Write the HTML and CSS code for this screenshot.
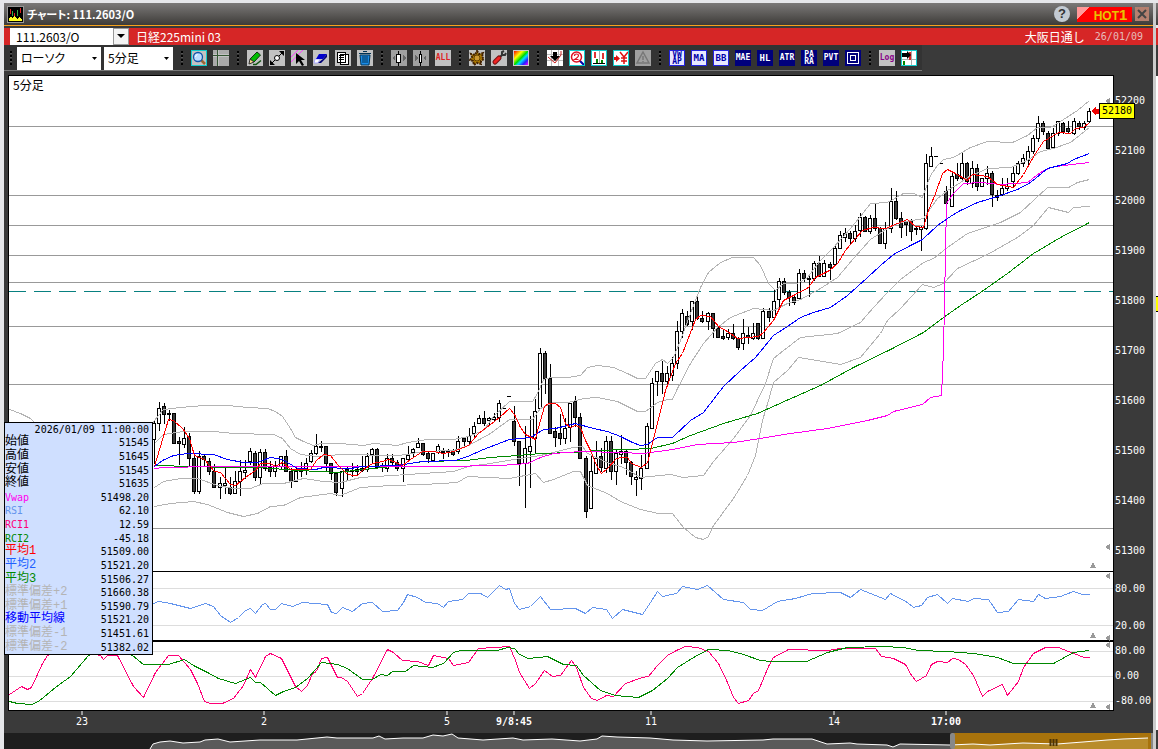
FILE: index.html
```html
<!DOCTYPE html>
<html lang="ja">
  <head>
    <title>チャート: 111.2603/O</title>
    <meta charset="utf-8" />
    <meta name="viewport" content="width=device-width, initial-scale=1.0" />
    <link rel="stylesheet" href="styles.css">
  </head>
  <body>
    <main class="window">
      <header class="title">
        <svg class="app" width="17" height="17" viewBox="0 0 17 17" shape-rendering="crispEdges">
          <path fill="#000" stroke="#999" d="M.5.5h16v16H.5z" />
          <path stroke="#d22" d="M3.5 3v5M7.5 7v4M13.5 2v5" />
          <path stroke="#3a4" d="M5.5 5v5M10.5 4v6" />
          <path fill="#ff2" d="M2 15v-3l2-1 1 1 3-2 2 3 2-2 3 2v2z" />
        </svg>
        <h1>チャート: 111.2603/O</h1>
        <button class="help" aria-label="ヘルプ">?</button>
        <button class="hot">HOT<b>1</b></button>
        <button class="close" aria-label="閉じる">
          <svg width="14" height="14"><path stroke="#444" stroke-width="2" d="M3 3l8 8M11 3l-8 8" /></svg>
        </button>
      </header>

      <div class="symbol">
        <input type="text" value="111.2603/O" aria-label="銘柄コード" />
        <button class="drop" aria-label="銘柄履歴"><svg width="8" height="5"><path d="M0 0h8L4 4z" /></svg></button>
        <span class="name">日経225mini 03</span>
        <span class="session">大阪日通し</span>
        <time class="mono">26/01/09</time>
      </div>

      <div class="toolbar">
        <div class="combos">
          <i class="sep"></i>
          <label class="combo wide">
            <select aria-label="チャート種別"><option>ローソク</option></select>
            <svg width="5" height="3"><path d="M0 0h5L2.5 3z" /></svg>
          </label>
          <label class="combo">
            <select aria-label="足種"><option>5分足</option></select>
            <svg width="5" height="3"><path d="M0 0h5L2.5 3z" /></svg>
          </label>
        </div>
        <i class="sep"></i>
        <button class="cyan" aria-label="拡大">
          <svg viewBox="1 1 14 14"><path stroke="#963" stroke-width="2.5" d="M10 10l4 4" /><circle cx="7" cy="7" r="4.5" fill="#bdf" stroke="#15a" stroke-width="1.3" /><path stroke="#fff" fill="none" d="M4.500 7q0-2 2-2.500" /></svg>
        </button>
        <button aria-label="十字線">
          <svg viewBox="0 0 16 16" shape-rendering="crispEdges"><path fill="#aaa" d="M0 0h4v4H0zM6 0h10v4H6zM0 7h4v9H0zM6 7h10v9H6z" /><path stroke="#353" d="M0 5.500h16M4.500 0v16" /></svg>
        </button>
        <i class="sep"></i>
        <button aria-label="ペン">
          <svg viewBox="0 0 16 16"><path fill="#0b0" stroke="#131" d="M3 9l7-7 3.500 3L7 12z" /><path fill="#fd8" stroke="#333" d="M3 9l4 3-5 2z" /><path stroke="#151" stroke-width="1.500" d="M6 14.500h3l5-4" fill="none" /></svg>
        </button>
        <button aria-label="トレンドライン">
          <svg viewBox="0 0 16 16"><path stroke="#000" d="M2 14L14 2" /><path d="M1 15v-5l5 5zM15 1v5l-5-5z" /><circle cx="8" cy="8" r="2.500" fill="#fff" stroke="#000" /></svg>
        </button>
        <button aria-label="選択">
          <svg viewBox="0 0 16 16"><path stroke="#f4f" d="M0 7l7-7M0 12L12 0" /><path d="M5 3l9 7H10l3 5-2 1-3-5-3 3z" /></svg>
        </button>
        <button aria-label="消しゴム">
          <svg viewBox="0 0 16 16"><path fill="#fff" stroke="#aaf" d="M2 9h5l-2 4H1z" /><path fill="#00c" d="M6 4h8l-4 5H3z" /><path fill="#007" d="M14 4v3l-6 6H5l5-4z" /></svg>
        </button>
        <button aria-label="コピー">
          <svg viewBox="0 0 16 16" shape-rendering="crispEdges"><path fill="#fff" stroke="#000" d="M5.500 4.500h8v10h-8zM2.500 2.500h8v10h-8z" /><path stroke="#000" d="M4 5.500h5M4 7.500h5M4 9.500h5" /></svg>
        </button>
        <button aria-label="削除">
          <svg viewBox="0 0 16 16"><path fill="#1a8ce8" stroke="#035" d="M3 5h10l-1 10H4z" /><path stroke="#035" d="M2 3.500h12M6 1.500h4M6 6v7M8 6v7M10 6v7" /></svg>
        </button>
        <i class="sep"></i>
        <button class="dim" aria-label="足を狭く">
          <svg viewBox="0 0 16 16" shape-rendering="crispEdges"><path fill="#666" d="M1 8l3-3v6zM15 8l-3-3v6z" /><path d="M7 1h1v15H7z" /><path fill="#fff" stroke="#000" d="M5.500 4.500h4v8h-4z" /></svg>
        </button>
        <button class="dim" aria-label="足を広く">
          <svg viewBox="0 0 16 16" shape-rendering="crispEdges"><path fill="#666" d="M5 8L2 5v6zM10 8l3-3v6z" /><path d="M7 1h1v15H7z" /><path fill="#fff" stroke="#000" d="M6.500 4.500h2v8h-2z" /></svg>
        </button>
        <button class="all">ALL</button>
        <i class="sep"></i>
        <button aria-label="設定">
          <svg viewBox="0 0 16 16"><path stroke="#420" stroke-width="2" stroke-dasharray="2 1" fill="#a70" d="M8 1l2 3 4-1-1 4 2 2-3 2v3l-4-1-3 2-1-4-3-1 2-3-1-3 4 1z" /><circle cx="8" cy="8" r="3" fill="#c93" stroke="#640" /></svg>
        </button>
        <button aria-label="ツール">
          <svg viewBox="0 0 16 16"><path stroke="#333" stroke-width="2" fill="none" d="M8 8l3-3V2l2-1M11 5h3l1-2" /><path stroke="#711" stroke-width="5" stroke-linecap="round" d="M4 12l4-4" /><path stroke="#e22" stroke-width="3" stroke-linecap="round" d="M4 12l4-4" /></svg>
        </button>
        <button class="rainbow" aria-label="配色"></button>
        <i class="sep"></i>
        <button class="paper" aria-label="シグナル">
          <svg viewBox="0 0 16 16"><path stroke="#bbb" d="M0 4.500h16M0 10.500h16M4.500 0v16M11.500 0v16" /><path stroke="#c22" fill="none" d="M1 7l7 6 6-8V1" /><path d="M6 2h4v4h3l-5 5-5-5h3z" /></svg>
        </button>
        <button class="paper cyan" aria-label="銘柄比較">
          <svg viewBox="1 1 14 14"><path stroke="#00a" stroke-width="2" d="M10 10l5 5" /><circle cx="7.500" cy="7" r="5" fill="#fff" stroke="#d12" stroke-width="1.500" /><path fill="none" stroke="#d12" stroke-width="1.200" d="M5.500 6q0-2 2-2t2 1.500-4 4h4" /></svg>
        </button>
        <button class="paper cyan" aria-label="出来高">
          <svg viewBox="1 1 14 14" shape-rendering="crispEdges"><path fill="#d33" d="M3 2h2v6H3zM11 3h2v6h-2z" /><path stroke="#aaa" d="M8.500 1v12" /><path fill="#080" d="M5 9h2v4H5zM10 10h2v3h-2z" /><path d="M2 13h12v1H2z" /></svg>
        </button>
        <button class="paper cyan" aria-label="価格">
          <svg viewBox="1 1 14 14"><path fill="#d11" d="M1 7h2V5l4 3.500L3 12v-2H1z" /><path stroke="#d11" stroke-width="1.500" fill="none" d="M7 2l4 5 4-5M11 7v7M8 8h6M8 11h6" /></svg>
        </button>
        <button class="off" aria-label="アラート">
          <svg viewBox="0 0 16 16"><path fill="none" stroke="#777" stroke-width="1.500" d="M8 2l6 11H2zM8 6v4M8 11v1" /></svg>
        </button>
        <i class="sep"></i>
        <button class="ind two lit">VW<br />AP</button>
        <button class="ind lit">MA</button>
        <button class="ind lit">BB</button>
        <button class="ind tight">MAE</button>
        <button class="ind">HL</button>
        <button class="ind tight">ATR</button>
        <button class="ind two">PA<br />RA</button>
        <button class="ind tight">PVT</button>
        <button class="ind" aria-label="枠">
          <svg viewBox="0 0 16 16" shape-rendering="crispEdges"><path fill="none" stroke="#fff" d="M2.500 2.500h11v11h-11zM5.500 5.500h5v5h-5z" /></svg>
        </button>
        <i class="sep"></i>
        <button class="log">Log</button>
        <button class="paper cyan" aria-label="右寄せ">
          <svg viewBox="1 1 14 14"><path stroke="#aaa" d="M0 9.500h16M10.500 0v16" /><path fill="#d22" d="M8 2h2v8H8z" /><path fill="#080" d="M2 11h2v4H2z" /><path d="M1 3h5V1l4 4-4 4V7H1z" /></svg>
        </button>
      </div>

      <section class="chart">
        <div class="plot">
          <svg id="plot" viewBox="9 76 1104 634" preserveAspectRatio="none"></svg>
          <span class="foot">5分足</span>
          <output class="price mono">52180</output>
        </div>
        <div class="axis mono">
          <span>52200</span><span>52100</span><span>52000</span><span>51900</span><span>51800</span>
          <span>51700</span><span>51600</span><span>51500</span><span>51400</span><span>51300</span>
          <span class="sub rsi">80.00</span><span class="sub">20.00</span>
          <span class="sub">80.00</span><span class="sub">0.00</span><span class="sub">-80.00</span>
        </div>
        <table class="values">
          <thead>
            <tr><th colspan="2" class="mono">2026/01/09 11:00:00</th></tr>
          </thead>
          <tbody class="mono">
            <tr><th>始値</th><td>51545</td></tr>
            <tr><th>高値</th><td>51645</td></tr>
            <tr><th>安値</th><td>51545</td></tr>
            <tr><th>終値</th><td>51635</td></tr>
            <tr class="vwap latin"><th>Vwap</th><td>51498.20</td></tr>
            <tr class="rsi latin"><th>RSI</th><td>62.10</td></tr>
            <tr class="rci1 latin"><th>RCI1</th><td>12.59</td></tr>
            <tr class="rci2 latin"><th>RCI2</th><td>-45.18</td></tr>
            <tr class="ma1"><th>平均1</th><td>51509.00</td></tr>
            <tr class="ma2"><th>平均2</th><td>51521.20</td></tr>
            <tr class="ma3"><th>平均3</th><td>51506.27</td></tr>
            <tr class="band"><th>標準偏差+2</th><td>51660.38</td></tr>
            <tr class="band"><th>標準偏差+1</th><td>51590.79</td></tr>
            <tr class="mid"><th>移動平均線</th><td>51521.20</td></tr>
            <tr class="band"><th>標準偏差-1</th><td>51451.61</td></tr>
            <tr class="band"><th>標準偏差-2</th><td>51382.02</td></tr>
          </tbody>
        </table>
      </section>

      <svg id="times" class="times mono"></svg>
      <svg id="nav" class="nav" viewBox="4 733 1149 16" preserveAspectRatio="none"></svg>
    </main>

    <aside class="next">
      <div class="next-title"></div>
      <div class="next-symbol"></div>
      <div class="next-tools"></div>
      <div class="next-body"><i></i></div>
      <div class="next-foot"></div>
    </aside>
    <script src="chart.js"></script>
  </body>
</html>
```
FILE: styles.css
```css
html,
body {
  margin: 0;
  padding: 0;
}
body {
  display: flex;
  min-height: 100vh;
  padding: 3px 0 0 4px;
  box-sizing: border-box;
  overflow: hidden;
  font: 12px/16px "Noto Sans CJK JP", sans-serif;
  color: #000;
  background: #e6e7ea;
}
button,
input,
select {
  margin: 0;
  border: 0;
  padding: 0;
  border-radius: 0;
  font: inherit;
  color: inherit;
}
.mono {
  font: 10px/14px "DejaVu Sans Mono", "Noto Sans CJK JP", monospace;
}
.window {
  flex: 1;
  min-width: 0;
  display: flex;
  flex-direction: column;
  background: #3a3a3a;
}

/* title bar */
.title {
  display: flex;
  align-items: center;
  gap: 3px;
  height: 22px;
  padding: 0 4px 0 3px;
  border-bottom: 1px solid #f5a21c;
  color: #fff;
  background: linear-gradient(#7b7978, #3d3b38);
}
.title h1 {
  flex: 1;
  margin: 0;
  font-size: 11px;
  font-feature-settings: "palt";
}
.title .help {
  width: 16px;
  height: 16px;
  margin-right: 4px;
  border-radius: 50%;
  font: bold 13px/16px "Liberation Sans", sans-serif;
  color: #333;
  background: #c3cad2;
}
.title .hot {
  width: 55px;
  height: 15px;
  padding-left: 12px;
  font: bold 12px/15px "Liberation Sans", sans-serif;
  color: #e8c400;
  background: linear-gradient(135deg, #f99 9px, #f00 9px);
}
.hot b {
  font-size: 15px;
}
.title .close {
  width: 14px;
  height: 14px;
  background: #b5806f;
}
.close svg {
  display: block;
}

/* symbol bar */
.symbol {
  display: flex;
  align-items: center;
  height: 17px;
  margin-top: 2px;
  padding: 0 10px 0 6px;
  color: #fff;
  background: #d62626;
}
.symbol input {
  width: 97px;
  height: 17px;
  padding-left: 6px;
  color: #000;
  background: #fff;
}
.symbol .drop {
  width: 16px;
  height: 17px;
  border: 1px solid #999;
  background: #f4f4f4;
  line-height: 0;
}
.symbol .name {
  flex: 1;
  padding-left: 7px;
}
.symbol time {
  padding-left: 10px;
  color: #e6bcbc;
}

/* toolbar */
.toolbar {
  align-self: flex-start;
  display: flex;
  align-items: center;
  gap: 6px;
  height: 24px;
  padding: 1px 5px 0 4px;
  border-bottom: 1px solid #777;
  background: #333;
}
.combos {
  display: flex;
  align-items: center;
  gap: 3px;
}
.sep {
  width: 2px;
  height: 14px;
  margin: 0 2px;
  background: repeating-linear-gradient(#000 0 2px, #555 2px 3px, #333 3px 4px);
}
.combo {
  display: grid;
  align-items: center;
  width: 69px;
}
.combo.wide {
  width: 84px;
}
.combo select,
.combo svg {
  grid-area: 1 / 1;
}
.combo select {
  appearance: none;
  height: 23px;
  padding-left: 4px;
  font-feature-settings: "palt";
  background: #fff;
}
.combo svg {
  justify-self: end;
  margin-right: 4px;
  pointer-events: none;
}
.toolbar button {
  width: 16px;
  height: 16px;
  overflow: hidden;
  font: bold 8px/16px "DejaVu Sans Mono", monospace;
  text-align: center;
  white-space: nowrap;
  background: #c2c2c2;
}
.toolbar button svg {
  display: block;
  width: 100%;
  height: 100%;
}
.toolbar .dim,
.toolbar .off {
  background: #a0a0a0;
}
.toolbar .paper {
  background: #fff;
}
.toolbar .cyan {
  border: 1px solid #1cc;
}
.toolbar .all {
  color: #d22;
}
.toolbar .log {
  color: #808;
}
.toolbar .rainbow {
  border: 1px solid #ccc;
  background: linear-gradient(135deg, #f00, #ff0 30%, #0d0 50%, #0df 62%, #22f 80%, #f0f);
}
.toolbar .ind {
  color: #fff;
  background: #00007c;
}
.toolbar .ind:not(.tight):not(.two) {
  font-size: 9px;
}
.toolbar .two {
  font-size: 8px;
  line-height: 7px;
}
.toolbar .lit {
  border: 1px solid #22d;
  line-height: 14px;
  color: #00a;
  background: #e8e8ff;
}
.toolbar .two.lit {
  line-height: 7px;
}

/* chart */
.chart {
  position: relative;
  display: flex;
  align-items: flex-start;
  margin-top: 4px;
  padding-left: 4px;
}
.plot {
  position: relative;
  flex: 1;
  min-width: 0;
  border: 1px solid #000;
  background: #fff;
}
.plot svg {
  display: block;
  width: 100%;
  height: 634px;
  shape-rendering: crispEdges;
}
.foot {
  position: absolute;
  top: 1px;
  left: 4px;
}
.price {
  position: absolute;
  top: 27px;
  right: -22px;
  z-index: 1;
  border: 1px solid #000;
  padding: 0 2px;
  background: #ff0;
}
.axis {
  display: flex;
  flex-direction: column;
  width: 38px;
  padding: 1px 0 0 1px;
  color: #fff;
}
.axis span {
  height: 50px;
  line-height: 50px;
}
.axis .sub {
  height: 25px;
  line-height: 25px;
}
.axis .sub:last-child {
  height: 22px;
}
.axis .rsi {
  margin-bottom: 12px;
}
.values {
  position: absolute;
  left: 0;
  bottom: 56px;
  width: 149px;
  height: 233px;
  border: 1px solid #000;
  border-collapse: separate;
  border-spacing: 0;
  background: #cfdfff;
}
.values th,
.values td {
  padding: 0;
  line-height: 13px;
}
.values tbody th {
  font: 12px/13px "Liberation Mono", "Noto Sans CJK JP", monospace;
  text-align: left;
  color: inherit;
}
.values .latin th {
  font: 10px/13px "DejaVu Sans Mono", monospace;
}
.values td,
.values thead th {
  padding-right: 3px;
  font-weight: normal;
  text-align: right;
  color: #000;
}
.times {
  width: 100%;
  height: 22px;
}
.times text {
  fill: #fff;
  text-anchor: middle;
}
.times .day {
  font-weight: bold;
}
.times line {
  stroke: #fff;
}
.nav {
  width: 100%;
  height: 16px;
}

/* line colours, shared by the plot and the value list */
.line {
  fill: none;
  stroke: currentColor;
  vector-effect: non-scaling-stroke;
}
.vwap { color: #f0e; }
.line.rsi, tr.rsi { color: #6495ed; }
.rci1 { color: #f07; }
.rci2 { color: #080; }
.ma1 { color: #f00; }
.ma2 { color: #2060ff; }
.line.ma2 { color: #00f; }
.ma3 { color: #080; }
.band { color: #b4b4b4; }
.mid { color: #00f; }

/* edge of the window behind */
.next {
  display: flex;
  flex-direction: column;
  width: 2px;
  border-left: 3px solid #ccc;
}
.next-title {
  height: 22px;
  background: linear-gradient(#7b7978, #3d3b38);
}
.next-symbol {
  height: 17px;
  margin-top: 3px;
  background: #d62626;
}
.next-tools {
  height: 31px;
  background: #3a3a3a;
}
.next-body {
  flex: 1;
  padding-top: 220px;
  background: #fff;
}
.next-body i {
  display: block;
  height: 14px;
  border: solid #000;
  border-width: 1px 0;
  background: #ff0;
}
.next-foot {
  height: 19px;
  background: #3a3a3a;
}
```
FILE: chart.js
```js
const NS = 'http://www.w3.org/2000/svg';

function add(parent, tag, attrs, text) {
  const e = document.createElementNS(NS, tag);
  for (const [k, v] of Object.entries(attrs)) e.setAttribute(k, v);
  if (text) e.textContent = text;
  parent.appendChild(e);
  return e;
}

// high, body top, body bottom, low; a leading "-" is a falling bar
const bars = `
421,423,439,463 402,408,423,430 -403,406,414,423 410,413,414,420 -413,413,443,443 -437,441,443,464
427,438,444,447 -433,436,458,465 -455,458,491,493 451,456,491,493 -454,456,459,465 -458,461,471,474
-464,471,487,487 477,483,487,498 468,483,485,493 -477,487,493,494 471,481,493,493 460,471,481,495
460,470,472,478 448,451,461,464 -451,453,477,480 449,452,477,484 -449,452,468,470 -461,467,471,476
461,465,471,476 456,456,466,468 -450,456,471,471 -468,471,481,487 468,471,481,481 -462,468,471,476
458,463,469,474 450,453,461,462 434,446,453,454 441,446,447,451 -446,446,463,470 -463,463,473,479
-473,473,492,495 471,471,488,496 -467,469,471,479 463,470,471,476 -465,469,471,475 456,468,470,471
453,456,469,471 448,449,454,463 -448,449,467,467 463,466,467,471 454,458,468,471 -454,458,462,464
-460,462,468,470 458,458,468,481 446,455,459,459 448,449,452,457 438,443,447,447 -443,443,454,455
-452,453,458,462 453,453,460,460 444,446,452,453 448,451,452,458 449,451,452,456 -449,451,454,455
436,441,451,453 -437,438,441,447 428,436,441,444 422,426,433,436 415,418,423,423 -411,418,423,425
417,418,420,424 413,417,419,421 400,403,417,421 408,408,408,409 396,396,396,397 -406,421,441,445
-441,441,463,485 426,448,463,507 416,446,451,487 399,411,438,452 348,353,408,408 -351,353,378,393
-364,378,433,433 -427,431,437,446 -414,433,438,444 418,428,438,443 403,403,427,441 -396,401,417,426
-413,417,458,458 -456,458,511,517 456,471,508,508 441,458,473,473 -448,456,467,471 436,441,468,472
-436,441,471,479 449,453,471,484 435,451,454,463 -449,451,462,474 -461,462,476,484 471,477,479,495
455,468,478,489 423,426,468,468 378,383,428,428 371,371,381,395 -361,373,381,393 366,373,381,386
357,363,375,380 321,331,363,368 309,313,331,337 -311,316,324,325 301,301,321,329 -296,301,318,319
-311,318,321,322 312,313,321,329 -313,313,328,337 -326,328,337,337 -330,336,338,339 329,333,337,339
-324,333,338,339 -337,338,347,349 319,333,343,349 -327,335,337,343 323,333,338,339 -323,323,338,339
308,311,338,338 -308,311,317,321 290,301,317,317 278,281,299,306 -278,281,292,294 -290,292,297,305
-295,297,302,304 269,273,298,298 -270,273,278,281 276,278,279,296 261,263,278,280 -256,263,276,276
260,263,276,276 -262,264,267,279 246,248,264,265 231,235,248,248 228,233,237,241 -231,233,238,244
225,231,238,241 213,217,230,236 -216,217,231,231 215,218,231,233 -203,218,228,230 -227,228,243,243
222,228,243,248 188,201,228,232 -191,201,218,219 -212,218,227,237 -221,221,224,235 -219,220,231,240
226,228,229,234 226,227,229,250 154,163,228,229 147,156,166,166 156,156,156,158 163,163,163,164
-186,191,203,205 172,176,206,206 -163,174,178,180 152,163,178,180 -162,163,181,184 161,168,183,187
-164,168,186,190 178,178,186,186 166,173,178,184 -171,173,194,206 190,195,197,200 178,188,194,195
178,186,188,190 166,173,181,187 161,163,173,174 154,158,163,166 146,151,160,166 135,138,151,153
116,123,138,141 -121,123,131,134 -131,133,148,148 128,133,147,148 121,121,133,135 -122,123,131,133
-121,128,131,133 118,121,133,134 -121,123,126,129 121,123,127,129 108,111,121,122`;

const lines = {
  'band up2': `9,409 20,413 30,418 35,423 60,440 110,450 140,440 154,420 163,409 180,407 203,405 227,405 247,407
    267,408 275,411 282,416 290,428 295,437 303,441 313,445 320,443 340,443 363,445 373,443 397,445 407,442
    427,439 453,439 468,436 483,430 493,416 509,401 532,401 537,393 543,379 550,377 567,377 580,375 587,367
    597,365 613,367 627,373 637,378 645,378 655,363 662,359 667,363 673,357 680,340 690,313 700,287 708,272
    720,262 732,257 753,257 760,265 768,283 775,290 783,283 797,283 807,277 820,260 833,247 850,228 860,216
    870,203 887,202 903,193 913,193 922,197 930,175 937,165 943,159 953,157 970,147 987,141 1012,142 1027,135
    1037,127 1050,127 1060,121 1077,110 1089,100`,
  'band up1': `154,443 163,434 183,431 213,431 233,433 273,434 282,438 290,448 300,454 317,456 340,454 397,455
    407,454 423,451 453,450 468,445 490,433 509,419 532,419 540,408 553,402 568,402 583,398 597,397 617,401
    627,406 637,411 645,411 657,402 667,399 672,399 677,388 690,363 703,343 717,327 730,317 753,308 773,310
    787,303 800,299 820,288 837,277 853,258 870,239 887,228 900,222 923,218 937,198 947,190 960,182 967,177
    987,168 1010,167 1027,160 1040,151 1053,148 1070,142 1089,127`,
  'band dn1': `154,487 163,481 180,478 197,478 217,485 233,488 250,488 263,483 283,483 303,478 323,481 340,482
    360,477 407,474 453,471 468,466 490,463 520,458 540,455 573,447 582,446 587,453 607,462 623,467 640,477
    670,474 683,477 703,475 713,461 733,438 750,415 757,400 765,383 773,358 783,350 800,337 837,333 860,322
    873,307 887,292 900,279 923,262 933,258 947,247 967,233 1000,222 1020,212 1047,187 1068,187 1077,182
    1089,179`,
  'band dn2': `154,506 170,503 193,501 207,504 227,512 243,516 257,513 270,506 283,505 300,497 330,493 340,495
    360,487 390,485 423,484 457,482 467,476 509,478 535,473 543,482 553,479 573,471 580,471 587,485 607,493
    620,501 640,509 658,513 672,513 683,527 695,537 703,539 708,536 713,525 733,498 747,475 755,455 762,420
    768,400 773,382 787,370 798,357 840,364 860,357 880,333 887,320 900,308 922,284 933,287 943,283 957,268
    987,254 1003,245 1017,237 1033,225 1048,207 1060,210 1068,212 1073,207 1089,206`,
  ma3: `154,465 230,467 260,467 297,470 320,471 337,472 363,469 383,467 403,464 423,461 465,460 490,457 517,455
    540,453 573,452 597,450 627,449 650,448 672,443 690,435 723,423 757,413 786,400 820,385 853,367 890,349
    923,332 943,317 960,305 980,292 1007,273 1033,253 1060,237 1089,222`,
  vwap: `154,468 163,467 213,466 440,466 500,465 527,463 540,457 553,453 580,451 620,452 643,453 672,449 697,444
    733,442 760,438 783,434 827,428 867,420 887,415 893,411 922,404 930,397 941,395 943,350 946,203 953,193
    963,183 980,182 1000,184 1027,182 1040,172 1050,167 1063,165 1089,162`,
  ma2: `154,466 162,460 173,455 187,453 213,454 227,459 243,462 257,462 270,457 282,459 297,468 315,469 323,467
    350,468 362,466 398,465 422,461 455,460 467,456 483,449 509,439 530,437 543,429 555,428 575,423 593,428
    607,431 620,436 632,442 640,445 647,444 657,437 672,437 690,420 703,412 723,386 740,370 755,357 773,335
    787,326 800,317 813,312 830,307 847,295 867,277 880,265 893,254 910,245 922,239 937,225 950,216 960,210
    977,202 997,196 1017,189 1030,182 1047,168 1067,163 1073,159 1089,153`,
  ma1: `154,466 168,419 173,420 182,428 189,438 194,455 204,459 214,471 220,472 230,484 235,485 245,477 255,470
    260,463 270,463 275,466 282,462 290,469 310,469 316,460 323,454 330,455 337,464 346,473 352,475 357,475
    362,470 372,463 382,461 388,459 393,461 402,465 410,459 422,451 433,451 443,453 453,451 468,445 478,433
    490,424 499,417 509,408 514,414 520,427 525,434 535,439 538,427 544,406 548,403 555,403 560,407 565,423
    570,427 575,425 580,427 585,440 590,450 596,465 601,473 607,468 616,458 622,457 627,457 631,463 641,467
    647,462 651,447 657,423 665,390 675,363 682,353 692,327 695,319 700,315 710,316 718,326 727,331 737,338
    758,336 763,332 773,320 783,300 793,295 808,287 815,277 829,270 837,263 845,250 855,238 862,230 872,227
    885,228 897,223 907,219 915,226 923,227 928,210 935,193 942,173 947,169 953,172 967,180 972,174 987,176
    997,184 1013,187 1023,174 1035,153 1043,141 1058,132 1070,133 1075,128 1083,127 1089,122`,
  rsi: `153,603 158,601 170,603 190,608 205,603 213,606 220,615 230,622 238,617 245,610 250,608 255,613 262,604
    265,603 270,609 275,609 281,603 292,606 302,602 327,604 331,612 336,613 342,607 352,611 362,603 372,602
    382,611 397,610 403,602 407,594 417,597 425,602 437,603 443,607 448,601 462,599 468,593 480,593 487,597
    499,585 505,589 509,588 514,603 519,609 530,606 540,596 550,609 575,608 585,613 592,607 606,609 612,618
    622,609 642,614 650,602 657,591 662,596 676,593 682,586 697,589 707,585 723,599 743,602 750,609 762,610
    777,601 795,598 812,593 840,592 850,597 860,589 875,595 885,599 890,593 907,602 913,607 921,605 927,597
    937,594 947,603 952,598 968,601 973,598 988,599 997,612 1008,611 1018,599 1033,601 1038,594 1045,598
    1060,596 1073,591 1082,594 1089,594`,
  rci1: `9,694 21,686 27,689 31,687 42,663 47,655 60,648 100,655 103,659 107,655 117,655 133,686 143,697 155,672
    168,655 178,655 190,669 197,683 204,701 210,703 222,703 233,698 243,685 250,669 255,677 265,656 270,653
    281,658 287,670 295,686 301,691 307,685 312,673 316,671 321,658 327,657 337,677 341,677 347,681 357,696
    362,693 372,678 387,649 393,652 402,660 417,661 428,665 433,655 448,658 453,665 468,662 478,648 509,646
    515,660 519,672 529,688 535,683 544,670 552,676 560,675 571,660 576,667 583,687 591,698 597,700 606,695
    613,696 625,683 642,677 648,676 657,665 667,655 676,650 685,646 697,647 708,651 718,663 727,682 733,697
    738,703 748,700 753,693 758,690 768,666 773,657 788,649 827,650 840,648 875,648 881,656 893,658 905,664
    911,675 916,681 926,675 931,664 937,661 947,662 952,658 958,659 965,664 973,675 982,696 987,691 1002,684
    1007,695 1018,681 1023,667 1033,653 1045,647 1058,647 1073,653 1084,657 1089,657`,
  rci2: `9,701 17,703 31,704 38,701 55,687 70,676 82,662 88,655 110,648 132,655 143,664 168,664 184,659 193,665
    207,672 218,678 235,683 250,677 255,682 260,682 275,695 283,691 295,687 307,678 316,668 321,662 337,664
    347,668 362,679 372,679 380,674 387,675 392,671 405,671 413,665 432,667 443,663 453,652 460,650 497,650
    507,647 514,648 519,654 528,658 547,656 563,664 576,665 583,675 600,690 615,695 638,697 652,690 667,678
    677,667 693,657 708,649 728,650 743,654 760,660 770,661 806,661 827,652 847,647 882,646 903,647 918,650
    947,651 973,653 997,657 1013,663 1053,663 1073,652 1089,650`,
};

const plot = document.getElementById('plot');

const rule = (y, color, h = 1) => add(plot, 'rect', { x: 9, y, width: 1104, height: h, fill: color });
for (const y of [126, 195, 225, 255, 282, 326, 384, 528]) rule(y, '#999');
for (const y of [588, 625, 651, 676, 701]) rule(y, '#ddd');
rule(571, '#000');
rule(640, '#000', 2);
add(plot, 'path', { d: 'M9 291.5H1113', stroke: '#088080', 'stroke-dasharray': '17 8' });

bars.trim().split(/\s+/).forEach((bar, i) => {
  const down = bar[0] === '-';
  const [high, top, bottom, low] = bar.replace('-', '').split(',').map(Number);
  const x = Math.round(153.5 + i * 5.083);
  if (low > high + 2) add(plot, 'rect', { x, y: high, width: 1, height: low - high + 1, fill: '#000' });
  add(plot, 'rect', { x: x - 2, y: top, width: 4, height: bottom - top + 1, fill: '#000' });
  if (bottom - top > 1)
    add(plot, 'rect', { x: x - 1, y: top + 1, width: 2, height: bottom - top - 1, fill: down ? '#3a3a3a' : '#fff' });
});

// strokes run through pixel centres
const curves = add(plot, 'g', { transform: 'translate(.5 .5)' });
for (const [name, points] of Object.entries(lines)) add(curves, 'polyline', { class: 'line ' + name, points });

// panel resize marks
for (const y of [101, 547, 576, 638, 645, 707]) add(plot, 'path', { d: `M1105 ${y}l5-3v6z`, fill: '#999' });
for (const y of [562, 632, 702]) add(plot, 'path', { d: `M1093 ${y}l3 6h-6z`, fill: '#999' });
add(plot, 'path', { d: 'M1091 111l5-4v2h4v5h-4v2z', fill: '#e00' });

const times = document.getElementById('times');
for (const [x, label, day] of [[82, '23'], [264, '2'], [447, '5'], [514, '9/8:45', 1], [651, '11'], [834, '14'], [946, '17:00', 1]]) {
  const at = ((x - 4) / 1149) * 100 + '%';
  add(times, 'line', { x1: at, x2: at, y1: 0, y2: 4 });
  add(times, 'text', { x: at, y: 14, class: day ? 'day' : '' }, label);
}

const nav = document.getElementById('nav');
const trail = `150,749 153,744 160,742 170,741 183,743 200,742 205,740 218,739 230,742 260,740 297,740 317,738 327,737
  337,738 373,738 379,736 385,739 403,738 423,738 433,735 443,736 452,734 458,738 483,740 513,738 523,740 552,739
  580,741 597,739 602,736 617,737 650,738 673,740 707,741 763,740 773,739 812,739 827,744 850,743 857,744 887,745
  893,747 900,744 950,745 973,744 990,745 1023,743 1057,744 1083,742 1107,740 1123,739 1148,738`;
add(nav, 'rect', { x: 4, y: 733, width: 1149, height: 16, fill: '#1e1e1e' });
add(nav, 'polygon', { points: trail + ' 1148,749', fill: '#5a5a5a' });
add(nav, 'rect', { x: 953, y: 733, width: 200, height: 16, fill: '#a8730c' });
add(nav, 'polygon', { points: '953,749 953,745 973,744 990,745 1023,743 1057,744 1083,742 1107,740 1148,738 1148,749', fill: '#b88c2c' });
add(nav, 'polyline', { points: trail, class: 'line', color: '#fff' });
add(nav, 'rect', { x: 950, y: 733, width: 5, height: 16, rx: 2, fill: '#888' });
add(nav, 'rect', { x: 1151, y: 733, width: 2, height: 16, fill: '#888' });
add(nav, 'path', { d: 'M1050.5 739v7M1053.5 739v7M1056.5 739v7', stroke: '#4a3305', 'stroke-width': 2 });
```
